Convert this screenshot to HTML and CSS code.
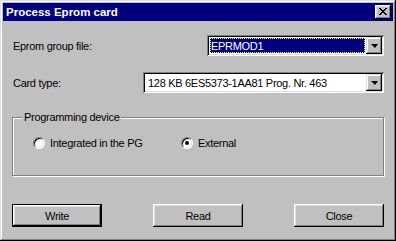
FILE: index.html
```html
<!DOCTYPE html>
<html lang="en">
<head>
    <meta charset="UTF-8">
    <title>Process Eprom card</title>
    <link rel="stylesheet" href="styles.css">
</head>
<body>
    <div class="window">
        <div class="titlebar">
            <span class="title">Process Eprom card</span>
            <div class="title-close">
                <svg width="8" height="7" viewBox="0 0 8 7" shape-rendering="crispEdges">
                    <rect x="0" y="0" width="2" height="1"/><rect x="6" y="0" width="2" height="1"/>
                    <rect x="1" y="1" width="2" height="1"/><rect x="5" y="1" width="2" height="1"/>
                    <rect x="2" y="2" width="4" height="1"/>
                    <rect x="3" y="3" width="2" height="1"/>
                    <rect x="2" y="4" width="4" height="1"/>
                    <rect x="1" y="5" width="2" height="1"/><rect x="5" y="5" width="2" height="1"/>
                    <rect x="0" y="6" width="2" height="1"/><rect x="6" y="6" width="2" height="1"/>
                </svg>
            </div>
        </div>

        <div class="content">
            <div class="row row-file">
                <label class="label">Eprom group file:</label>
                <div class="combo combo-file">
                    <div class="combo-value focused"><span>EPRMOD1</span></div>
                    <div class="combo-btn"><span class="arrow"></span></div>
                </div>
            </div>

            <div class="row row-card">
                <label class="label">Card type:</label>
                <div class="combo combo-card">
                    <div class="combo-value"><span>128 KB 6ES5373-1AA81 Prog. Nr. 463</span></div>
                    <div class="combo-btn"><span class="arrow"></span></div>
                </div>
            </div>

            <div class="group">
                <span class="group-title">Programming device</span>
                <div class="radios">
                    <div class="radio radio-pg">
                        <span class="radio-dot"></span>
                        <span>Integrated in the PG</span>
                    </div>
                    <div class="radio">
                        <span class="radio-dot checked"></span>
                        <span>External</span>
                    </div>
                </div>
            </div>

            <div class="buttons">
                <div class="btn default"><span>Write</span></div>
                <div class="btn"><span>Read</span></div>
                <div class="btn"><span>Close</span></div>
            </div>
        </div>
    </div>
</body>
</html>
```

FILE: styles.css
```css
* {
    margin: 0;
    padding: 0;
    box-sizing: border-box;
}

body {
    background: #c0c0c0;
    font-family: "Liberation Sans", Arial, sans-serif;
    font-size: 11px;
    letter-spacing: -0.3px;
    color: #000;
}

.window {
    width: 396px;
    height: 241px;
    padding: 3px;
    background: #c0c0c0;
    box-shadow: inset -1px -1px #000, inset 1px 1px #dfdfdf,
                inset -2px -2px #808080, inset 2px 2px #fff;
}

.titlebar {
    height: 18px;
    background: #000080;
    display: flex;
    align-items: center;
    justify-content: space-between;
    padding: 0 2px 0 3px;
}

.title {
    color: #fff;
    font-weight: bold;
    font-size: 11.5px;
    letter-spacing: 0;
}

.title-close {
    width: 16px;
    height: 14px;
    background: #c0c0c0;
    display: flex;
    align-items: center;
    justify-content: center;
    padding-bottom: 1px;
    box-shadow: inset -1px -1px #000, inset 1px 1px #fff,
                inset -2px -2px #808080, inset 2px 2px #dfdfdf;
}

.content {
    padding: 0 9px 0 9px;
}

.row {
    display: flex;
    align-items: center;
    justify-content: space-between;
}

.row-file {
    margin-top: 14px;
}

.row-card {
    margin-top: 16px;
}

.label {
    padding-left: 1px;
}

.combo {
    height: 21px;
    display: flex;
    align-items: center;
    padding: 2px;
    background: #fff;
    box-shadow: inset 1px 1px #808080, inset -1px -1px #fff,
                inset 2px 2px #000, inset -2px -2px #dfdfdf;
}

.combo-file {
    width: 177px;
}

.combo-card {
    width: 241px;
}

.combo-value {
    flex: 1;
    height: 17px;
    display: flex;
    align-items: center;
    padding-left: 3px;
}

.combo-value.focused {
    background: #000080;
    color: #fff;
    margin: 0 1px 0 1px;
    padding-left: 1px;
    outline: 1px dotted #ffff00;
    outline-offset: -1px;
    height: 15px;
}

.combo-btn {
    width: 16px;
    height: 17px;
    background: #c0c0c0;
    display: flex;
    align-items: center;
    justify-content: center;
    box-shadow: inset -1px -1px #000, inset 1px 1px #dfdfdf,
                inset -2px -2px #808080, inset 2px 2px #fff;
}

.arrow {
    width: 0;
    height: 0;
    border-left: 4px solid transparent;
    border-right: 3px solid transparent;
    border-top: 4px solid #000;
    margin-top: 1px;
}

.group {
    margin-top: 24px;
    height: 59px;
    border: 1px solid #808080;
    box-shadow: inset 1px 1px #fff, 1px 1px #fff;
    padding: 0 0 0 20px;
}

.group-title {
    display: inline-block;
    margin-left: -11px;
    margin-top: -7px;
    padding: 0 2px;
    background: #c0c0c0;
    line-height: 13px;
    vertical-align: top;
}

.radios {
    display: flex;
    margin-top: 7px;
}

.radio {
    display: flex;
    align-items: center;
    gap: 5px;
}

.radio-pg {
    width: 148px;
}

.radio-dot {
    width: 12px;
    height: 12px;
    border-radius: 50%;
    background: #fff;
    border: 1px solid;
    border-color: #808080 #fff #fff #808080;
    box-shadow: inset 1px 1px #000, inset -1px -1px #dfdfdf;
    display: flex;
    align-items: center;
    justify-content: center;
}

.radio-dot.checked::after {
    content: "";
    width: 4px;
    height: 4px;
    border-radius: 50%;
    background: #000;
}

.buttons {
    display: flex;
    justify-content: space-between;
    margin-top: 28px;
}

.btn {
    width: 90px;
    height: 23px;
    display: flex;
    align-items: center;
    justify-content: center;
    box-shadow: inset -1px -1px #000, inset 1px 1px #fff,
                inset -2px -2px #808080, inset 2px 2px #dfdfdf;
}

.btn.default {
    border: 1px solid #000;
}
```
